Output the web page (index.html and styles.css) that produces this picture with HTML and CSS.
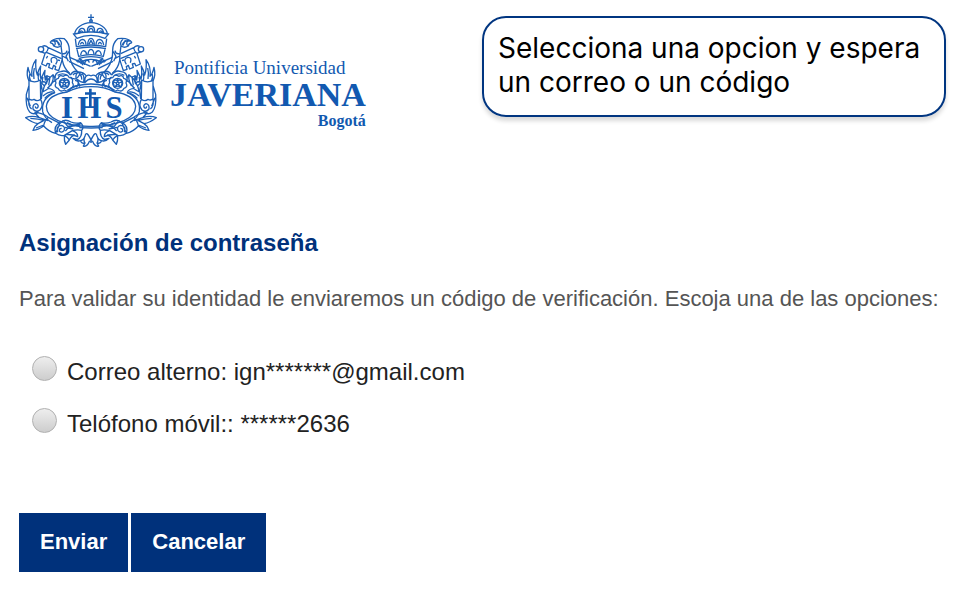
FILE: index.html
```html
<!DOCTYPE html>
<html lang="es">
<head>
<meta charset="utf-8">
<meta name="viewport" content="width=device-width, initial-scale=1">
<title>Asignación de contraseña</title>
<link rel="stylesheet" href="styles.css">
</head>
<body>
<header class="header">
  <div class="brand">
    <svg class="crest" viewBox="0 0 450 450" aria-hidden="true">
      <defs>
        <g id="half">
          <!-- tiara -->
          <path d="M225 50C198 51 178 66 176 84M171 82L183 97Q203 88 225 88M176 84Q200 77 225 78M178 98L181 122Q203 117 225 117M180 128Q203 123 225 123M183 130L188 151Q207 146 225 146M188 157Q207 152 225 152M191 157L201 178"/>
          <path d="M187 84Q188 68 197 67Q207 66 207 80M190 82Q195 68 201 80M214 79Q213 61 225 60M218 78Q220 67 225 67M187 117Q189 101 200 100Q209 101 210 116M193 115Q199 103 203 115M215 116Q216 98 225 97M219 115L225 103M194 147Q196 135 203 134Q211 136 212 146M216 146Q217 131 225 130M205 177Q207 164 213 162Q219 163 220 170M196 167Q209 160 225 160"/>
          <!-- key -->
          <circle cx="75" cy="130" r="8"/>
          <path d="M79 121Q90 116 97 126Q95 137 87 142Q79 140 74 136M97 125L136 143M91 139L137 158M161 154L224 181M159 166L204 188M87 143L77 174L90 180L94 172L101 174L98 184L109 189L113 178L119 182L117 190L128 194L139 160M107 170Q101 153 115 154Q130 159 119 175M95 150L91 157M132 164L126 162"/>
          <!-- ribbon over the key -->
          <path d="M102 110Q112 94 145 98Q160 111 160 133Q159 166 176 187Q185 200 198 207M102 110Q112 112 113 120Q127 128 135 119Q139 145 139 163Q144 188 161 202M108 105Q126 101 131 117M114 104Q122 114 113 120M122 103L130 119M135 119Q139 108 129 100M139 150L154 158M140 143Q151 145 153 134M158 137L150 151L157 166M180 165L195 160L205 171M184 169Q190 164 197 174"/>
          <!-- flames -->
          <path d="M39 225Q30 207 36 184Q40 204 48 211Q44 183 60 161Q57 187 64 207Q67 191 74 180Q71 205 75 219Q81 205 87 193Q84 207 88 222L93 209Q96 222 91 235M44 226Q38 214 41 205M54 219Q51 200 55 186M68 224Q65 209 69 202M80 229Q78 221 81 213"/>
          <!-- side strap -->
          <path d="M39 222Q55 233 73 222L74 280Q62 288 54 280Q45 285 39 278ZM39 238L31 265Q28 303 41 318Q54 329 68 317M39 278Q35 300 47 309M74 280Q84 298 72 312Q60 321 51 309Q49 295 60 293Q71 298 64 306Q59 308 58 301M73 224L79 254L76 279M33 275L43 301"/>
          <!-- laurel -->
          <path d="M80 258Q87 224 111 206Q115 231 94 247M85 239L74 229Q84 225 90 230M94 224L88 211Q99 209 103 215M94 247Q113 248 116 260Q99 263 86 277M80 258Q93 252 100 244M81 270Q94 258 110 257M111 206Q119 215 117 227M102 213L98 238M104 239Q109 226 117 225"/>
          <!-- rosette -->
          <path d="M127 217Q129 205 142 211Q154 202 160 215Q173 216 169 230Q177 241 164 247Q159 261 145 252Q132 260 126 247Q113 243 120 231Q115 220 127 217Z"/>
          <circle cx="145" cy="232" r="15"/>
          <circle cx="145" cy="232" r="4"/>
          <path d="M145 217V228M131 227L141 231M159 227L149 231M136 244L142 236M154 244L148 236M131 227Q137 219 145 224Q153 219 159 227M136 244Q132 237 131 227M136 244Q145 237 154 244Q157 237 159 227"/>
          <path d="M117 216Q117 199 134 197Q151 190 163 207M125 208Q140 199 154 208M163 207Q174 191 186 198Q177 207 181 218Q168 220 163 213M171 207Q177 199 183 203M181 218Q193 231 181 244M186 198Q203 198 211 210Q205 215 207 230Q193 229 181 218M190 205Q198 209 197 221M198 203Q206 209 203 227M166 247Q176 237 185 240M211 210Q218 205 225 210M207 230Q215 219 225 219M177 223Q190 225 191 242M191 205L184 216"/>
          <!-- cartouche -->
          <path d="M225 234Q183 234 154 253M116 260Q75 277 80 317Q86 338 108 350M225 242Q184 242 154 258Q95 266 91 301Q92 330 126 344Q169 362 225 361M190 365L225 366"/>
          <!-- lower banners -->
          <path d="M29 335Q47 327 70 335Q60 326 57 320Q79 320 97 334L132 352L119 382Q99 378 83 360Q66 372 51 373Q55 360 66 353Q49 350 29 335ZM43 337Q67 338 84 343L66 353M70 335L96 344M97 334Q85 345 83 360M60 366L83 357M132 352Q145 336 165 348Q178 354 194 350Q206 361 197 373Q183 370 169 374Q186 380 185 392Q168 384 150 386M119 382Q112 360 132 350M125 379Q118 360 137 358Q149 362 144 374Q137 382 130 375Q129 367 137 367M144 347L155 361L194 354M148 375Q165 354 192 362M119 382Q130 391 145 388L169 374M145 388Q157 395 160 402L149 415Q144 405 145 388M160 402Q166 389 177 387M153 350L176 360M147 364L172 369"/>
          <!-- bottom ornament -->
          <path d="M197 374Q198 393 185 400L171 397Q181 408 194 404Q203 402 207 390Q211 371 225 402M194 404Q196 414 207 411L202 420Q213 424 221 404M207 390Q201 402 207 411M225 402V410"/>
        </g>
      </defs>
      <g class="crest-lines">
        <use href="#half"/>
        <use href="#half" transform="matrix(-1 0 0 1 450 0)"/>
        <path d="M225 25V50M216 34H234"/>
        <circle cx="225" cy="45" r="4"/>
      </g>
      <path class="crest-cross" d="M219 248H227V259H240V266H227V303H219V266H207V259H219Z"/>
      <g class="crest-letters">
        <text x="153" y="335">I</text>
        <text x="220" y="335">H</text>
        <text x="294" y="335">S</text>
      </g>
    </svg>
    <div class="wordmark">
      <span class="wordmark-top">Pontificia Universidad</span>
      <span class="wordmark-name">JAVERIANA</span>
      <span class="wordmark-city">Bogotá</span>
    </div>
  </div>
  <p class="hint">Selecciona una opcion y espera un correo o un código</p>
</header>
<main>
  <h1 class="title">Asignación de contraseña</h1>
  <form class="form">
    <fieldset class="options">
      <legend class="intro">Para validar su identidad le enviaremos un código de verificación. Escoja una de las opciones:</legend>
      <div class="option">
        <input class="radio" type="radio" name="medio" id="correo">
        <label for="correo">Correo alterno: ign*******@gmail.com</label>
      </div>
      <div class="option">
        <input class="radio" type="radio" name="medio" id="movil">
        <label for="movil">Telófono móvil:: ******2636</label>
      </div>
    </fieldset>
    <div class="actions">
      <button class="button" type="submit">Enviar</button>
      <button class="button" type="button">Cancelar</button>
    </div>
  </form>
</main>
</body>
</html>
```
FILE: styles.css
```css
* {
  box-sizing: border-box;
}

body {
  margin: 0;
  padding: 6px 20px 24px 19px;
  background: #fff;
  color: #222;
  font-family: "Liberation Sans", Arial, sans-serif;
}

.header {
  display: flex;
  justify-content: space-between;
  align-items: flex-start;
}

.brand {
  display: flex;
  align-items: flex-start;
  color: #1259b0;
  font-family: "Liberation Serif", "Times New Roman", serif;
}

.crest {
  width: 150px;
  height: 150px;
  margin-left: -3px;
}

.crest-lines {
  fill: none;
  stroke: #1d60b5;
  stroke-width: 4;
  stroke-linejoin: round;
}

.crest-cross,
.crest-letters {
  fill: #1259b0;
}

.crest-letters {
  font-size: 92px;
  font-weight: 700;
  text-anchor: middle;
}

.wordmark {
  display: flex;
  flex-direction: column;
  padding-top: 52px;
  padding-left: 4px;
}

.wordmark-top {
  padding-left: 4px;
  font-size: 19px;
  line-height: 20px;
}

.wordmark-name {
  font-size: 34px;
  font-weight: 700;
  line-height: 34px;
}

.wordmark-city {
  align-self: flex-end;
  font-size: 16px;
  font-weight: 700;
  line-height: 18px;
}

.hint {
  width: 464px;
  margin: 10px 0 0;
  padding: 13px 14px 16px;
  border: 2px solid #003580;
  border-radius: 24px;
  box-shadow: 0 4px 4px rgba(0, 0, 0, 0.15);
  color: #000;
  font-family: Inter, sans-serif;
  font-size: 28px;
  line-height: 34px;
}

.title {
  margin: 72px 0 0;
  color: #00317b;
  font-size: 24px;
  line-height: 30px;
}

.form {
  padding-top: 28px;
}

.options {
  margin: 0;
  padding: 0;
  border: 0;
}

.intro {
  padding: 0;
  color: #555;
  font-size: 22px;
  line-height: 26px;
}

.option {
  display: flex;
  align-items: flex-start;
  gap: 10px;
  margin-left: 13px;
  font-size: 24px;
  line-height: 32px;
}

.option:first-of-type {
  margin-top: 44px;
}

.option + .option {
  margin-top: 20px;
}

.radio {
  appearance: none;
  flex: none;
  width: 25px;
  height: 25px;
  margin: 0;
  border: 1px solid #b0b0b0;
  border-radius: 50%;
  background: linear-gradient(#eee, #cdcdcd);
}

.radio:checked {
  background: radial-gradient(circle, #444 35%, #ddd 40%);
}

.actions {
  display: flex;
  gap: 3px;
  margin-top: 73px;
}

.button {
  padding: 16px 21px 17px;
  border: 0;
  background: #00317b;
  color: #fff;
  font-family: inherit;
  font-size: 22px;
  font-weight: 700;
  line-height: 26px;
}
```
